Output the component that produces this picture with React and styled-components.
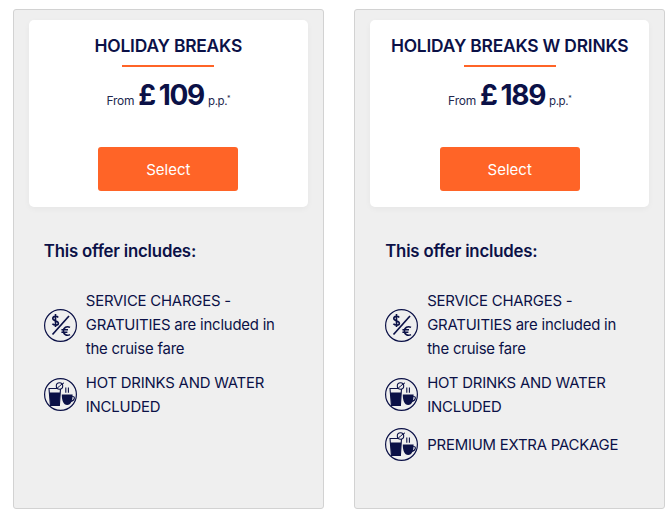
import React from "react";
import styled, { createGlobalStyle } from "styled-components";

const Global = createGlobalStyle`
  html, body {
    margin: 0;
    padding: 0;
    background: #fff;
    font-family: "Inter", "Liberation Sans", sans-serif;
    color: #0b1147;
  }
`;

const Page = styled.div`
  width: 672px;
  height: 520px;
  box-sizing: border-box;
  padding: 9px 0 0 12.8px;
  display: flex;
  gap: 30.4px;
  overflow: hidden;
`;

const Card = styled.div`
  width: 311px;
  height: 500px;
  flex-shrink: 0;
  box-sizing: border-box;
  background: #efefef;
  border: 1px solid #d2d2d2;
  border-radius: 3px;
  padding: 10px 15px 0;
`;

const Top = styled.div`
  height: 187px;
  background: #fff;
  border-radius: 5px;
  box-shadow: 0 2px 6px rgba(0, 0, 0, 0.04);
  display: flex;
  flex-direction: column;
  align-items: center;
  padding-top: 16px;
  box-sizing: border-box;
`;

const Title = styled.div`
  font-size: 17.4px;
  line-height: 20px;
  font-weight: 600;
  letter-spacing: -0.2px;
  white-space: nowrap;
`;

const Rule = styled.div`
  width: 92px;
  height: 2px;
  background: #ff6427;
  margin-top: 9px;
`;

const PriceRow = styled.div`
  display: flex;
  align-items: baseline;
  gap: 4px;
  margin-top: 10px;
  height: 36px;
  font-size: 12px;
`;

const Amount = styled.span`
  font-size: 28px;
  font-weight: 700;
  letter-spacing: -1.3px;
  word-spacing: -1.5px;
  margin-top: 1px;
`;

const Small = styled.span`
  font-size: 12px;
  color: #23284f;
  letter-spacing: -0.2px;
`;

const PerPerson = styled(Small)`
  font-size: 11.5px;
  letter-spacing: -0.4px;
`;

const Star = styled.sup`
  font-size: 7px;
  line-height: 0;
  vertical-align: 4px;
`;

const Select = styled.button`
  width: 140px;
  height: 44px;
  margin-top: 34px;
  border: none;
  border-radius: 3px;
  background: #ff6427;
  color: #fff;
  font: 400 15px "Inter", "Liberation Sans", sans-serif;
  cursor: pointer;
`;

const Includes = styled.div`
  padding: 34px 0 0 15px;
`;

const IncludesTitle = styled.div`
  font-size: 16.8px;
  line-height: 20px;
  font-weight: 600;
  letter-spacing: -0.2px;
  margin-bottom: 28px;
`;

const Item = styled.div`
  display: flex;
  align-items: center;
  gap: 9px;
  width: 240px;
  margin-bottom: 9.5px;
`;

const ItemText = styled.div`
  font-size: 14.9px;
  line-height: 24px;
  letter-spacing: -0.2px;
  flex: 1;
`;

const IconBox = styled.svg`
  width: 33px;
  height: 33px;
  flex-shrink: 0;
`;

const MoneyIcon = () => (
  <IconBox viewBox="0 0 33 33" fill="none" stroke="#0b1147">
    <circle cx="16.5" cy="16.5" r="15.9" strokeWidth="1.2" />
    <path d="M8.5 25.5 L25 7" strokeWidth="1.7" />
    <path d="M14.2 8.4 C13 6.8 8.8 6.8 8.8 9.6 C8.8 12.4 14.4 11.4 14.4 14.2 C14.4 16.8 10 16.8 8.4 14.8 M11.5 5 V18" strokeWidth="1.6" />
    <path d="M26 18.4 C22.8 16.6 19.4 18.6 19.4 22 C19.4 25.4 22.8 27.4 26 25.6 M17.4 20.8 H24 M17.4 23.2 H23.4" strokeWidth="1.6" />
  </IconBox>
);

const DrinksIcon = () => (
  <IconBox viewBox="0 0 33 33" fill="none" stroke="#0b1147">
    <circle cx="16.5" cy="16.5" r="15.9" strokeWidth="1.2" />
    <path d="M5 10.5 H16.5 L15.4 27.5 H6.4 Z" strokeWidth="1.1" />
    <path d="M5.6 14.5 H16.2 L15.4 27.5 H6.4 Z" fill="#0b1147" stroke="none" />
    <circle cx="15.5" cy="8" r="3.2" strokeWidth="1.1" fill="#efefef" />
    <path d="M15.5 8 L13 10.5 M15.5 8 L20 4.8" strokeWidth="1" />
    <path d="M17.8 16.5 H28.6 C28.6 22.5 27 27 23.2 27 C19.4 27 17.8 22.5 17.8 16.5 Z" fill="#0b1147" stroke="none" />
    <path d="M28.2 18.5 C31.4 18 31.2 22.2 26.8 23.4" strokeWidth="1.1" />
    <path d="M21.8 9.5 V14.8 M24.4 9.5 V14.8" strokeWidth="1.1" />
  </IconBox>
);

const offers = [
  {
    title: "HOLIDAY BREAKS",
    price: "£ 109",
    items: [
      { icon: "money", text: "SERVICE CHARGES - GRATUITIES are included in the cruise fare" },
      { icon: "drinks", text: "HOT DRINKS AND WATER INCLUDED" },
    ],
  },
  {
    title: "HOLIDAY BREAKS W DRINKS",
    price: "£ 189",
    items: [
      { icon: "money", text: "SERVICE CHARGES - GRATUITIES are included in the cruise fare" },
      { icon: "drinks", text: "HOT DRINKS AND WATER INCLUDED" },
      { icon: "drinks", text: "PREMIUM EXTRA PACKAGE" },
    ],
  },
];

export default function App() {
  return (
    <Page>
      <Global />
      {offers.map((offer) => (
        <Card key={offer.title}>
          <Top>
            <Title>{offer.title}</Title>
            <Rule />
            <PriceRow>
              <Small>From</Small>
              <Amount>{offer.price}</Amount>
              <PerPerson>p.p.<Star>*</Star></PerPerson>
            </PriceRow>
            <Select>Select</Select>
          </Top>
          <Includes>
            <IncludesTitle>This offer includes:</IncludesTitle>
            {offer.items.map((item) => (
              <Item key={item.text}>
                {item.icon === "money" ? <MoneyIcon /> : <DrinksIcon />}
                <ItemText>{item.text}</ItemText>
              </Item>
            ))}
          </Includes>
        </Card>
      ))}
    </Page>
  );
}
